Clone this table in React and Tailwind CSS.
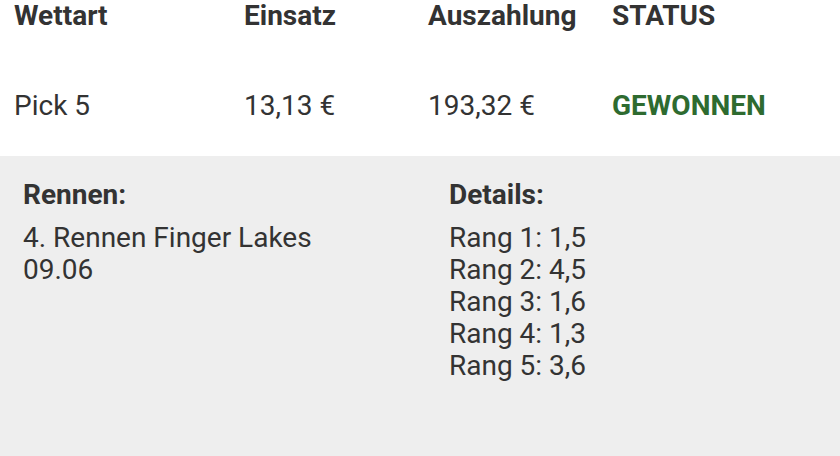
import React from 'react';

const bet = {
  type: 'Pick 5',
  stake: '13,13 €',
  payout: '193,32 €',
  status: 'GEWONNEN',
  race: ['4. Rennen Finger Lakes', '09.06'],
  details: ['Rang 1: 1,5', 'Rang 2: 4,5', 'Rang 3: 1,6', 'Rang 4: 1,3', 'Rang 5: 3,6'],
};

const App = () => {
  return (
    <div
      className="min-h-screen flex flex-col bg-white text-[#333333] text-[28px] leading-[32px]"
      style={{ fontFamily: 'Roboto, "Liberation Sans", sans-serif' }}
    >
      <div className="grid grid-cols-[230px_184px_184px_1fr] pl-[14px] h-[56px] font-bold">
        <div>Wettart</div>
        <div>Einsatz</div>
        <div>Auszahlung</div>
        <div>STATUS</div>
      </div>
      <div className="grid grid-cols-[230px_184px_184px_1fr] pl-[14px] h-[100px] items-center">
        <div>{bet.type}</div>
        <div>{bet.stake}</div>
        <div>{bet.payout}</div>
        <div className="font-bold text-[#2e6b30]">{bet.status}</div>
      </div>
      <div className="flex-1 bg-[#eeeeee] pt-[23px] pl-[23px] grid grid-cols-[426px_1fr] content-start">
        <div>
          <div className="font-bold">Rennen:</div>
          <div className="mt-[11px]">
            {bet.race.map((line) => (
              <div key={line}>{line}</div>
            ))}
          </div>
        </div>
        <div>
          <div className="font-bold">Details:</div>
          <div className="mt-[11px]">
            {bet.details.map((line) => (
              <div key={line}>{line}</div>
            ))}
          </div>
        </div>
      </div>
    </div>
  );
};

export default App;
